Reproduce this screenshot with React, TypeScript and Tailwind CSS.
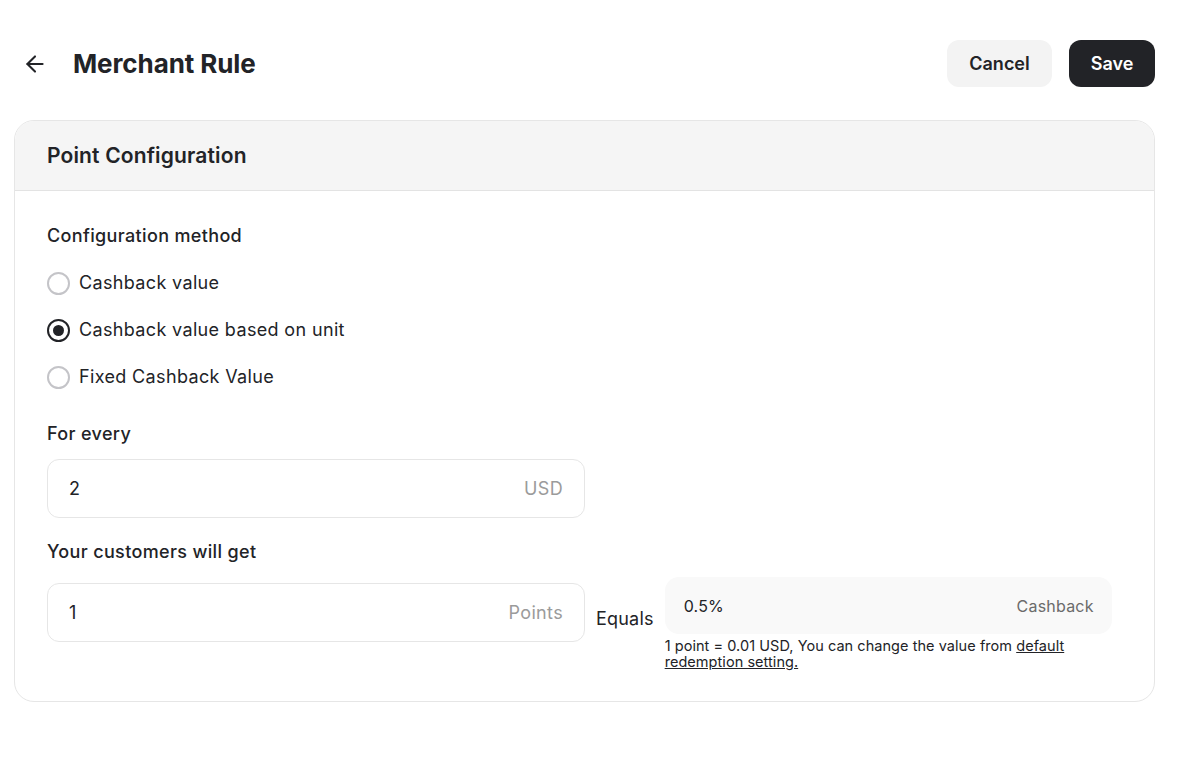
import { ArrowLeft } from 'lucide-react'

const METHODS = ['Cashback value', 'Cashback value based on unit', 'Fixed Cashback Value']

function Radio({ checked }: { checked: boolean }) {
  return (
    <span
      className={`w-[23px] h-[23px] rounded-full flex items-center justify-center flex-shrink-0 ${
        checked ? 'border-2 border-[#222327]' : 'border-2 border-[#c4c4c8]'
      }`}
    >
      {checked && <span className="w-[11px] h-[11px] rounded-full bg-[#222327]" />}
    </span>
  )
}

export default function App() {
  return (
    <div
      className="min-h-screen bg-white text-[#222327] pl-[14px] pr-[23px]"
      style={{ fontFamily: 'Inter, "Noto Sans", sans-serif' }}
    >
      {/* Header */}
      <div className="flex items-center justify-between pt-[40px] h-[87px]">
        <div className="flex items-center pl-[8px]">
          <ArrowLeft className="w-[26px] h-[26px]" strokeWidth={1.9} />
          <h1 className="ml-[25px] text-[26px] font-bold tracking-[-0.1px]">Merchant Rule</h1>
        </div>
        <div className="flex items-center gap-[17px]">
          <button className="h-[47px] w-[105px] rounded-[12px] bg-[#f3f3f3] text-[18px] font-semibold">
            Cancel
          </button>
          <button className="h-[47px] w-[86px] rounded-[12px] bg-[#222327] text-white text-[18px] font-semibold">
            Save
          </button>
        </div>
      </div>

      {/* Card */}
      <div className="mt-[33px] rounded-[20px] border border-[#e6e6e6] overflow-hidden">
        <div className="h-[70px] bg-[#f5f5f5] border-b border-[#e3e3e3] flex items-center px-[32px]">
          <h2 className="text-[21px] font-semibold tracking-[0.15px]">Point Configuration</h2>
        </div>

        <div className="px-[32px] pt-[32px] pb-[31px] text-[18px] tracking-[0.35px]">
          <div className="font-medium leading-[26px]">Configuration method</div>
          <div className="mt-[22px] flex flex-col gap-[23px]">
            {METHODS.map((m, i) => (
              <label key={m} className="flex items-center gap-[9px] h-[24px]">
                <Radio checked={i === 1} />
                <span className="leading-[24px]">{m}</span>
              </label>
            ))}
          </div>

          <div className="mt-[32px] font-medium leading-[26px]">For every</div>
          <div className="mt-[12px] w-[538px] h-[59px] rounded-[12px] border border-[#e6e6e6] flex items-center justify-between px-[21px]">
            <span>2</span>
            <span className="text-[#9b9b9b]">USD</span>
          </div>

          <div className="mt-[21px] font-medium leading-[26px]">Your customers will get</div>
          <div className="mt-[18px] flex items-start">
            <div className="w-[538px] h-[59px] rounded-[12px] border border-[#e6e6e6] flex items-center justify-between px-[21px]">
              <span>1</span>
              <span className="text-[#9b9b9b]">Points</span>
            </div>
            <span className="ml-[11px] mt-[24px] leading-[24px] tracking-[0.2px]">Equals</span>
            <div className="ml-[11px] -mt-[6px] w-[447px]">
              <div className="h-[57px] rounded-[14px] bg-[#f9f9f9] flex items-center justify-between pl-[19px] pr-[18px] text-[16px] tracking-[0.2px]">
                <span>0.5%</span>
                <span className="text-[#6b6b6b]">Cashback</span>
              </div>
              <p className="mt-[4px] text-[14.5px] leading-[16px] tracking-[0.05px] pr-[30px]">
                1 point = 0.01 USD, You can change the value from{' '}
                <a className="underline">default redemption setting.</a>
              </p>
            </div>
          </div>
        </div>
      </div>
    </div>
  )
}
